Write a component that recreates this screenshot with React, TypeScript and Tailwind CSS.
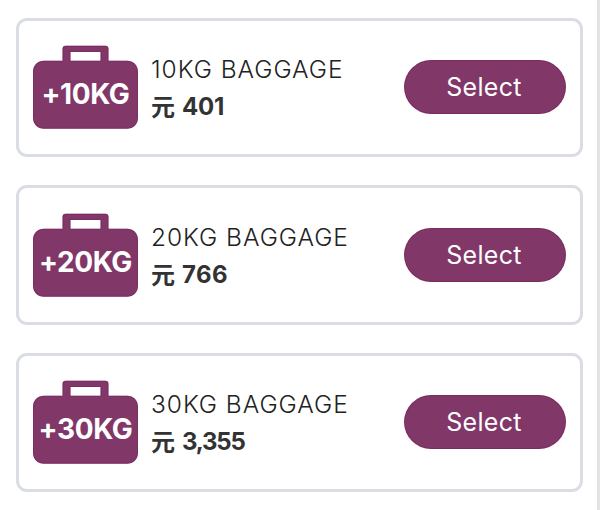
type Baggage = {
  weight: string;
  title: string;
  price: string;
  priceClass: string;
};

const options: Baggage[] = [
  {
    weight: '+10KG',
    title: '10KG BAGGAGE',
    price: '401',
    priceClass: 'tracking-[-0.2px]',
  },
  {
    weight: '+20KG',
    title: '20KG BAGGAGE',
    price: '766',
    priceClass: 'tracking-[0.4px]',
  },
  {
    weight: '+30KG',
    title: '30KG BAGGAGE',
    price: '3,355',
    priceClass: 'tracking-[-1.2px]',
  },
];

function SuitcaseIcon() {
  return (
    <svg className="block h-[84px] w-[105px]" viewBox="0 0 105 84" fill="none">
      <path
        fillRule="evenodd"
        fill="#813768"
        d="M32.5 0.7H72.5Q75.5 0.7 75.5 3.7V15.700H94C100.5 15.700 105 20.2 105 26.700V72.700C105 79.200 100.500 83.700 94 83.700H11C4.500 83.700 0 79.200 0 72.700V26.700C0 20.200 4.500 15.700 11 15.700H29.500V3.700Q29.500 .7 32.500 .7ZM37.500 7V15.700H67.500V7Z"
      />
      <path
        stroke="#6f1a52"
        strokeOpacity="0.35"
        d="M30 16V3.700Q30 1.200 32.500 1.200H72.500Q75 1.200 75 3.700V16M37 16V6.500H68V16M29.500 16.200H11C5 16.200 .5 20.700 .5 26.700V72.700C.5 78.700 5 83.200 11 83.200H94C100 83.200 104.500 78.700 104.500 72.700V26.700C104.500 20.700 100 16.200 94 16.200H75.500M37 16.200H68"
      />
    </svg>
  );
}

function BaggageCard({ item }: { item: Baggage }) {
  return (
    <div className="flex h-[139.5px] items-center rounded-[11px] border-[3px] border-[#dadde3] bg-white px-3.5">
      {/* Suitcase with weight label */}
      <div className="relative h-[84px] w-[105px] shrink-0">
        <SuitcaseIcon />
        <span className="absolute inset-x-0 top-[30px] text-center text-[28px] leading-[38px] font-bold tracking-[-0.4px] whitespace-nowrap text-white">
          {item.weight}
        </span>
      </div>

      <div className="ml-[13px] flex-1 pt-0.5 whitespace-nowrap">
        <p className="text-[24.5px] leading-[38px] font-light tracking-[0.95px] text-[#222]">{item.title}</p>
        <p className={`flex text-[24px] leading-[38px] font-bold text-[#333] ${item.priceClass}`}>
          <span className="w-[31px] font-['Noto_Sans_CJK_SC',sans-serif] leading-[36px]">元</span>
          <span>{item.price}</span>
        </p>
      </div>

      <button className="h-[54px] w-[162px] shrink-0 rounded-full border border-[#6f1a52]/40 bg-[#813768] pr-0.5 text-[25px] leading-[52px] tracking-[0.3px] text-white">
        Select
      </button>
    </div>
  );
}

export default function App() {
  return (
    <div className="flex h-[510px] w-[600px] overflow-hidden bg-white font-['Inter','Noto_Sans_CJK_SC',sans-serif]">
      <div className="ml-4 flex w-[567px] flex-col gap-7 pt-[17.5px]">
        {options.map((item) => (
          <BaggageCard key={item.title} item={item} />
        ))}
      </div>
      <div className="ml-auto w-[3px] bg-[#e3e3e3]" />
    </div>
  );
}
